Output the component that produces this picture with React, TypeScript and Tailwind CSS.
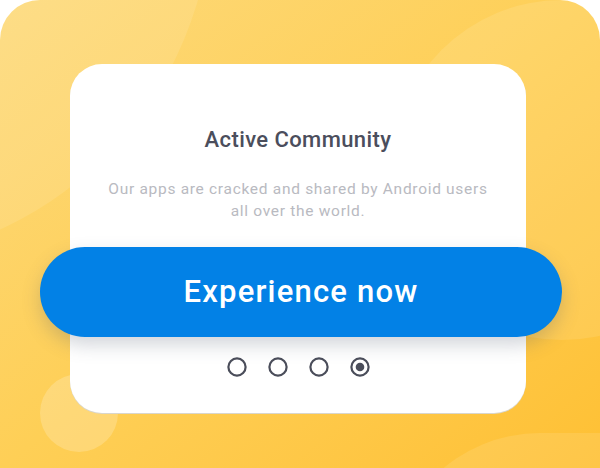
import React from 'react';

const Dot: React.FC<{ active?: boolean }> = ({ active }) => (
  <svg width="22" height="22" viewBox="0 0 22 22">
    <circle cx="11" cy="11" r="8.6" fill="none" stroke="#4a4d5a" strokeWidth="2.2" />
    {active && <circle cx="11" cy="11" r="4.3" fill="#4a4d5a" />}
  </svg>
);

export default function App() {
  return (
    <div className="w-[600px] h-[468px] bg-white overflow-hidden" style={{ fontFamily: 'Roboto, "Liberation Sans", sans-serif' }}>
      <div className="relative w-full h-full rounded-t-[40px] overflow-hidden bg-gradient-to-br from-[#fdd979] via-[#fecf56] to-[#fec033] pt-[64px] pl-[70px]">
        {/* background shapes */}
        <div className="pointer-events-none absolute -left-[512px] -top-[462px] w-[724px] h-[724px] rounded-full bg-white/10" />
        <div className="pointer-events-none absolute left-[392px] top-0 w-[340px] h-[340px] rounded-full bg-white/10" />
        <div className="pointer-events-none absolute left-[40px] top-[374px] w-[78px] h-[78px] rounded-full bg-white/20" />
        <div className="pointer-events-none absolute left-[390px] top-[433px] w-[500px] h-[300px] rounded-full bg-white/10" />

        <div className="relative w-[456px] h-[349px] bg-white rounded-[32px] shadow-[0_1px_0_#d9d6cc] flex flex-col items-center">
          <h1 className="mt-[62px] text-[22px] leading-[28px] font-medium tracking-[0.4px] text-[#4b4e5c]">Active Community</h1>
          <p className="mt-[24px] text-[15.5px] leading-[22px] text-[#b9bac1] text-center tracking-[0.7px]">
            Our apps are cracked and shared by Android users
            <br />
            all over the world.
          </p>
          <button className="mt-[25px] self-stretch -ml-[30px] -mr-[36px] h-[90px] rounded-full bg-[#0281e6] text-white text-[31px] font-medium tracking-[1.2px] shadow-[0_8px_18px_rgba(80,90,110,0.25)]">
            Experience now
          </button>
          <div className="mt-[19px] flex gap-[19px]">
            <Dot />
            <Dot />
            <Dot />
            <Dot active />
          </div>
        </div>
      </div>
    </div>
  );
}
